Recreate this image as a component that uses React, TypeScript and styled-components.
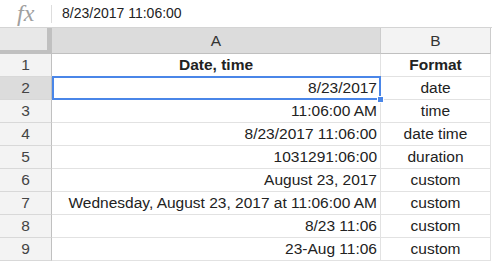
import React from 'react';
import styled, { createGlobalStyle } from 'styled-components';

const GlobalStyle = createGlobalStyle`
  html, body {
    margin: 0;
    padding: 0;
    background: #ffffff;
    overflow: hidden;
  }
  * {
    box-sizing: border-box;
  }
`;

const Page = styled.div`
  width: 492px;
  height: 261px;
  background: #ffffff;
  font-family: 'Liberation Sans', Arial, sans-serif;
  color: #222222;
`;

const FormulaBar = styled.div`
  display: flex;
  align-items: center;
  height: 28px;
  border-bottom: 1px solid #d4d4d4;
`;

const FxIcon = styled.div`
  width: 51px;
  padding-left: 17px;
  font-family: 'Liberation Serif', serif;
  font-style: italic;
  font-size: 24px;
  color: #a0a0a0;
  line-height: 27px;
`;

const Divider = styled.div`
  width: 1px;
  height: 18px;
  background: #dddddd;
`;

const FormulaText = styled.div`
  padding-left: 10px;
  font-size: 14px;
  line-height: 27px;
  color: #222222;
`;

const Sheet = styled.div`
  display: grid;
  grid-template-columns: 52px 329px 110px;
  grid-template-rows: 26px repeat(9, 23px);
`;

const Corner = styled.div`
  background: #e8e8e8;
  border-right: 5px solid #c0c0c0;
  border-bottom: 4px solid #c0c0c0;
`;

const ColHeader = styled.div<{ $selected?: boolean }>`
  display: flex;
  align-items: center;
  justify-content: center;
  background: ${(p) => (p.$selected ? '#dcdcdc' : '#f3f3f3')};
  border-right: 1px solid #cccccc;
  border-bottom: 1px solid #c0c0c0;
  font-size: 15.5px;
  color: #333333;
  padding-top: 1px;
`;

const RowHeader = styled.div<{ $selected?: boolean }>`
  display: flex;
  align-items: center;
  justify-content: center;
  background: ${(p) => (p.$selected ? '#dcdcdc' : '#f3f3f3')};
  border-right: 1px solid #c0c0c0;
  border-bottom: 1px solid #d8d8d8;
  font-size: 15.5px;
  color: #444444;
`;

const Cell = styled.div<{ $align: 'right' | 'center'; $bold?: boolean }>`
  position: relative;
  display: flex;
  align-items: center;
  justify-content: ${(p) => (p.$align === 'right' ? 'flex-end' : 'center')};
  padding: 0 3px;
  border-right: 1px solid #e2e2e2;
  border-bottom: 1px solid #e2e2e2;
  font-size: 15.5px;
  font-weight: ${(p) => (p.$bold ? 700 : 400)};
  color: #222222;
  white-space: nowrap;
`;

const Selection = styled.div`
  position: absolute;
  top: -1px;
  left: 0;
  right: -1px;
  bottom: -1px;
  border: 2px solid #4a86e8;
  z-index: 2;
  pointer-events: none;
`;

const Handle = styled.div`
  position: absolute;
  right: -5px;
  bottom: -5px;
  width: 7px;
  height: 7px;
  background: #4a86e8;
  border: 1px solid #ffffff;
`;

const rows: { value: string; format: string; header?: boolean }[] = [
  { value: 'Date, time', format: 'Format', header: true },
  { value: '8/23/2017', format: 'date' },
  { value: '11:06:00 AM', format: 'time' },
  { value: '8/23/2017 11:06:00', format: 'date time' },
  { value: '1031291:06:00', format: 'duration' },
  { value: 'August 23, 2017', format: 'custom' },
  { value: 'Wednesday, August 23, 2017 at 11:06:00 AM', format: 'custom' },
  { value: '8/23 11:06', format: 'custom' },
  { value: '23-Aug 11:06', format: 'custom' },
];

const selectedRow = 2;

export default function App() {
  return (
    <Page>
      <GlobalStyle />
      <FormulaBar>
        <FxIcon>fx</FxIcon>
        <Divider />
        <FormulaText>8/23/2017 11:06:00</FormulaText>
      </FormulaBar>
      <Sheet>
        <Corner />
        <ColHeader $selected>A</ColHeader>
        <ColHeader>B</ColHeader>
        {rows.map((row, i) => {
          const n = i + 1;
          const selected = n === selectedRow;
          return (
            <React.Fragment key={n}>
              <RowHeader $selected={selected}>{n}</RowHeader>
              <Cell $align={row.header ? 'center' : 'right'} $bold={row.header}>
                {row.value}
                {selected && (
                  <Selection>
                    <Handle />
                  </Selection>
                )}
              </Cell>
              <Cell $align="center" $bold={row.header}>
                {row.format}
              </Cell>
            </React.Fragment>
          );
        })}
      </Sheet>
    </Page>
  );
}
